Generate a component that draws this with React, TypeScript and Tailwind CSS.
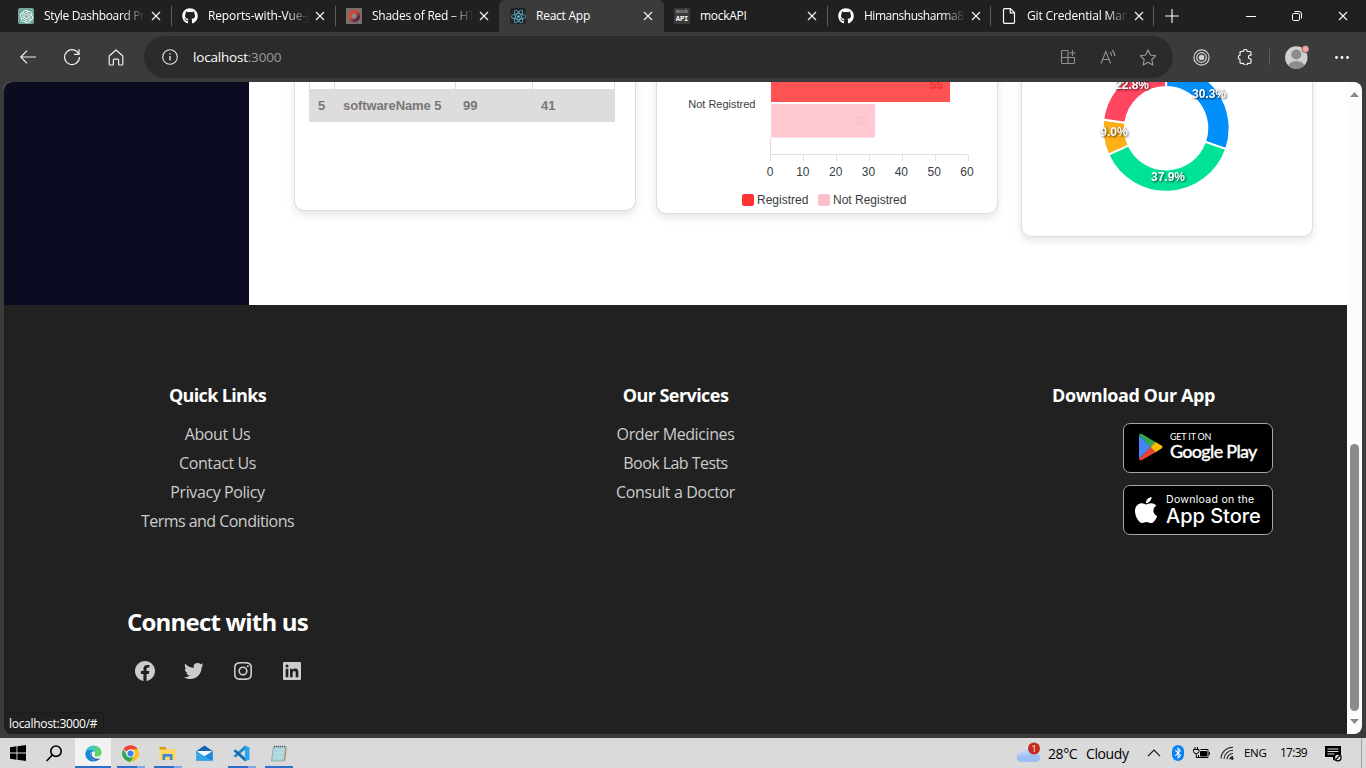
import React from "react";
import { FaGithub, FaReact, FaApple, FaBluetoothB } from "react-icons/fa";
import { SiOpenai } from "react-icons/si";
import { BiLogoFacebookCircle, BiLogoTwitter, BiLogoInstagram, BiLogoLinkedinSquare } from "react-icons/bi";

const CloseIcon = ({ className = "" }: { className?: string }) => (
  <svg width="10" height="10" viewBox="0 0 10 10" className={"shrink-0 " + className} fill="none" stroke="#f2f2f2" strokeWidth="1.2">
    <path d="M1 1l8 8M9 1l-8 8" />
  </svg>
);

type TabProps = { icon: React.ReactNode; title: string; width: string; text: string; active?: boolean; fade?: boolean; line?: boolean };

const Tab = ({ icon, title, width, text, active, fade, line }: TabProps) => (
  <div className={`flex h-8 shrink-0 items-center pl-[10px] ${width} ${active ? "rounded-t-[6px] bg-[#3b3b3b]" : ""}`}>
    <div className="flex h-4 w-4 shrink-0 items-center justify-center">{icon}</div>
    <div
      className={`ml-[10px] w-[101px] shrink-0 overflow-hidden whitespace-nowrap text-[12px] leading-[18px] text-white ${text} ${
        fade ? "[mask-image:linear-gradient(to_right,black_78%,transparent_100%)]" : ""
      }`}
    >
      {title}
    </div>
    <CloseIcon className="ml-[6px]" />
    <div className={`ml-auto h-5 w-px ${line ? "bg-[#5c5c5c]" : ""}`} />
  </div>
);

const TabBar = () => (
  <div className="flex h-8 shrink-0 items-center bg-[#202020] pl-2">
    <Tab
      width="w-[164px]" text="tracking-[-0.35px]" fade line title="Style Dashboard Project"
      icon={<div className="flex h-4 w-4 items-center justify-center rounded-[2px] bg-[#74aa9c]"><SiOpenai size={13} color="#fff" /></div>}
    />
    <Tab width="w-[164px]" text="tracking-[-0.14px]" fade line title="Reports-with-Vue-js" icon={<FaGithub size={16} color="#fff" />} />
    <Tab
      width="w-[163px]" text="tracking-[-0.25px]" fade title="Shades of Red – HTML"
      icon={
        <svg width="16" height="16" viewBox="0 0 16 16">
          <defs><linearGradient id="ring" x1="0" y1="0" x2="1" y2="1"><stop offset=".45" stopColor="#c54a38" /><stop offset=".8" stopColor="#4c2344" /></linearGradient></defs>
          <rect width="16" height="16" fill="#77706f" />
          <circle cx="8" cy="8" r="6.200" fill="url(#ring)" /><circle cx="8" cy="8" r="2.600" fill="#8b8785" />
        </svg>
      }
    />
    <Tab
      width="w-[165px]" text="ml-[11px] tracking-[-0.25px]" active title="React App"
      icon={<div className="ml-[2px] flex h-4 w-4 shrink-0 items-center justify-center rounded-[2px] bg-[#23272b]"><FaReact size={15} color="#61c5de" /></div>}
    />
    <Tab
      width="w-[164px]" text="tracking-[-0.28px]" line title="mockAPI"
      icon={
        <div className="flex h-4 w-4 flex-col items-center bg-[#3a3a3a] font-['Liberation_Mono'] font-bold">
          <span className="text-[5px] leading-[8px] text-[#9a9a9a]">mock</span>
          <span className="text-[7px] leading-[7px] text-white">API</span>
        </div>
      }
    />
    <Tab width="w-[163px]" text="tracking-[-0.48px]" fade line title="Himanshusharma83" icon={<FaGithub size={16} color="#fff" />} />
    <Tab
      width="w-[163px]" text="tracking-[-0.16px]" fade line title="Git Credential Manager"
      icon={
        <svg width="16" height="16" viewBox="0 0 16 16" fill="none" stroke="#fff" strokeWidth="1.2">
          <path d="M3.5 0.7h6l4 4v9.6q0 1-1 1h-9q-1 0-1-1V1.7q0-1 1-1z" /><path d="M9.3 0.9v4h4" />
        </svg>
      }
    />
    <svg width="14" height="14" viewBox="0 0 14 14" className="ml-[11px]" stroke="#fff" strokeWidth="1.1"><path d="M7 0v14M0 7h14" /></svg>
    <div className="ml-auto flex">
      <div className="flex w-[46px] items-center justify-center"><svg width="10" height="10" stroke="#fff"><path d="M0 5.5h10" /></svg></div>
      <div className="flex w-[46px] items-center justify-center">
        <svg width="10" height="10" fill="none" stroke="#fff"><rect x="0.5" y="2.5" width="7" height="7" rx="1.2" /><path d="M2.5 .5h4.5q2.5 0 2.5 2.5v4.5" /></svg>
      </div>
      <div className="flex w-[46px] items-center justify-center"><CloseIcon /></div>
    </div>
  </div>
);

const Cell = ({ children, w = "w-[44px]" }: { children: React.ReactNode; w?: string }) => (
  <div className={`flex h-[50px] shrink-0 items-center justify-center ${w}`}>{children}</div>
);

const Toolbar = () => (
  <div className="flex h-[50px] shrink-0 items-center pl-[6px]">
    <Cell>
      <svg width="16" height="14" viewBox="0 0 16 14" fill="none" stroke="#f0f0f0" strokeWidth="1.2"><path d="M16 7H1M7 .7L.8 7 7 13.3" /></svg>
    </Cell>
    <Cell>
      <svg width="18" height="18" viewBox="0 0 18 18" fill="none" stroke="#f0f0f0" strokeWidth="1.2"><path d="M15.8 6.2A7.4 7.4 0 1 0 16.4 9M16 1.3v5h-5" /></svg>
    </Cell>
    <Cell>
      <svg width="16" height="17" viewBox="0 0 16 17" fill="none" stroke="#f0f0f0" strokeWidth="1.2" strokeLinejoin="round">
        <path d="M1.2 7L8 1l6.800 6v8.200q0 .8-.8.8h-2.600q-.8 0-.8-.8V11q0-.8-.8-.8H6.200q-.8 0-.8.8v4.200q0 .8-.8.8H2q-.8 0-.8-.8z" />
      </svg>
    </Cell>
    <div className="ml-[6px] flex h-[42px] w-[1029px] items-center rounded-full bg-[#2b2b2b] pl-[18px] pr-[5px]">
      <svg width="16" height="16" viewBox="0 0 16 16" fill="none" stroke="#e6e6e6" strokeWidth="1.1"><circle cx="8" cy="8" r="7.3" /><path d="M8 7v4.500M8 4.300v1.300" strokeWidth="1.400" /></svg>
      <div className="ml-[15px] text-[13.500px] leading-5 tracking-[-0.2px] text-white">localhost<span className="text-[#9b9b9b]">:3000</span></div>
      <div className="ml-auto flex">
        <Cell w="w-10">
          <svg width="16" height="16" viewBox="0 0 16 16" fill="none" stroke="#8f8f8f" strokeWidth="1.1">
            <path d="M8 1.500H2.500q-1 0-1 1v11q0 1 1 1h11q1 0 1-1V8.500H1.500M8 1.500v13M12.500 1v6M9.500 4h6" />
          </svg>
        </Cell>
        <Cell w="w-10">
          <svg width="17" height="16" viewBox="0 0 17 16" fill="none" stroke="#8f8f8f" strokeWidth="1.1">
            <path d="M1 14.500L5.800 2.500l4.800 12M2.700 10.500h6.200M10 3q1.700 1.500 1.700 4M12 1.300q2.900 2.200 2.800 6" />
          </svg>
        </Cell>
        <Cell w="w-10">
          <svg width="18" height="17" viewBox="0 0 18 17" fill="none" stroke="#9b9b9b" strokeWidth="1.1" strokeLinejoin="round">
            <path d="M9 1l2.400 5 5.400.7-4 3.800 1 5.500L9 13.300 4.200 16l1-5.500-4-3.800L6.600 6z" />
          </svg>
        </Cell>
      </div>
    </div>
    <div className="w-[6px]" />
    <Cell>
      <svg width="17" height="17" viewBox="0 0 17 17" fill="none" stroke="#d0d0d0" strokeWidth="1.200">
        <circle cx="8.500" cy="8.500" r="7.600" /><circle cx="8.500" cy="8.500" r="4.800" /><circle cx="8.500" cy="8.500" r="2.200" fill="#d0d0d0" />
      </svg>
    </Cell>
    <Cell>
      <svg width="16" height="16" viewBox="0 0 16 16" fill="none" stroke="#f0f0f0" strokeWidth="1.200" strokeLinejoin="round">
        <path d="M4 2.500h2.200a2 2 0 0 1 4 0H13q1 0 1 1V6.200h-.6a1.900 1.900 0 0 0 0 3.800h.6v3.300q0 1-1 1h-2.500a2 2 0 0 1-4 0H4q-1 0-1-1V10.500a2.200 2.200 0 0 1 0-4.300V3.500q0-1 1-1z" />
      </svg>
    </Cell>
    <div className="ml-[2px] h-4 w-px bg-[#5d5d5d]" />
    <div className="ml-[14px] flex h-[26px] w-[26px] items-center">
      <svg width="26" height="26" viewBox="0 0 26 26">
        <clipPath id="av"><circle cx="12.300" cy="13.500" r="11.200" /></clipPath>
        <circle cx="12.300" cy="13.500" r="11.200" fill="#d2d0ce" />
        <circle cx="12.300" cy="10.500" r="5" fill="#8e8c8a" />
        <ellipse cx="12.300" cy="22.500" rx="8" ry="5.500" fill="#8e8c8a" clipPath="url(#av)" />
        <circle cx="21.500" cy="5" r="3.600" fill="#f4a6a0" stroke="#3b3b3b" strokeWidth=".6" />
      </svg>
    </div>
    <svg width="14" height="3" viewBox="0 0 14 3" className="ml-auto mr-[17px]" fill="#fff"><circle cx="1.500" cy="1.500" r="1.400" /><circle cx="7" cy="1.500" r="1.400" /><circle cx="12.500" cy="1.500" r="1.400" /></svg>
  </div>
);

const polar = (cx: number, cy: number, r: number, deg: number) => {
  const a = ((deg - 90) * Math.PI) / 180;
  return `${(cx + r * Math.cos(a)).toFixed(2)} ${(cy + r * Math.sin(a)).toFixed(2)}`;
};

const slice = (from: number, to: number) => {
  const [cx, cy, R, r] = [1166.1, 128.3, 63.5, 41.2];
  const big = to - from > 180 ? 1 : 0;
  return `M${polar(cx, cy, R, from)}A${R} ${R} 0 ${big} 1 ${polar(cx, cy, R, to)}L${polar(cx, cy, r, to)}A${r} ${r} 0 ${big} 0 ${polar(cx, cy, r, from)}Z`;
};

const slices = [
  { from: 0, to: 109.1, color: "#008ffb" },
  { from: 109.1, to: 245.5, color: "#00e396" },
  { from: 245.5, to: 277.9, color: "#feb019" },
  { from: 277.9, to: 360, color: "#ff4560" },
];

const donutLabels = [
  { x: 1209, y: 98, t: "30.3%" },
  { x: 1168, y: 181, t: "37.9%" },
  { x: 1114, y: 136, t: "9.0%" },
  { x: 1132, y: 89, t: "22.8%" },
];

const card = "shrink-0 rounded-b-[10px] border border-t-0 border-[#dddddd] bg-white shadow-[0_4px_8px_rgba(0,0,0,0.1)] -mt-[20px] pt-[20px]";

const Dashboard = () => (
  <div className="flex h-[223px] shrink-0 overflow-hidden bg-white">
    <div className="w-[245px] shrink-0 bg-[#0b0b22]" />
    <div className="flex items-start pl-[45px]">
      <div className={`h-[149px] w-[342px] pl-[14px] ${card}`}>
        <div className="w-[306px] font-['Liberation_Sans',sans-serif] text-[13px] font-bold tracking-[-0.1px] text-[#7b7676]">
          <div className="flex h-[7px] border-r border-[#dddddd]">
            <div className="w-[25px] border-l border-[#dddddd]" />
            <div className="w-[121px] border-l border-[#dddddd]" />
            <div className="w-[77px] border-l border-[#dddddd]" />
            <div className="border-l border-[#dddddd]" />
          </div>
          <div className="flex h-[33px] items-center bg-[#dddddd]">
            <div className="w-[25px] pl-[9px]">5</div>
            <div className="w-[121px] pl-[9px]">softwareName 5</div>
            <div className="w-[77px] pl-[8px]">99</div>
            <div className="pl-[9px]">41</div>
          </div>
        </div>
      </div>
      <div className={`ml-5 h-[152px] w-[342px] ${card}`}>
        <svg width="340" height="130" viewBox="657 82 340 130" className="font-['Liberation_Sans',sans-serif]" fill="#373d3f" fontSize="12">
          <rect x="771" y="70" width="179" height="32" fill="#ff5252" />
          <rect x="771" y="104" width="104" height="33.500" fill="#ffc9d2" />
          <text x="943" y="89" textAnchor="end" fontWeight="bold" fill="#ff3333">55</text>
          <text x="868" y="125" textAnchor="end" fontWeight="bold" fill="#ffc0cb">32</text>
          <text x="755.500" y="108" textAnchor="end" fontSize="11">Not Registred</text>
          <path d="M770.500 138.500V154.500M770 154.500H967M770.500 155v6M803.500 155v6M836.500 155v6M869.500 155v6M902.500 155v6M935.500 155v6M968.500 155v6" stroke="#dedede" fill="none" />
          {[0, 10, 20, 30, 40, 50, 60].map((n) => (
            <text key={n} x={770 + n * 3.283} y="176" textAnchor="middle">{n}</text>
          ))}
          <rect x="742" y="194" width="12" height="12" rx="2" fill="#ff3333" />
          <text x="757" y="204">Registred</text>
          <rect x="818" y="194" width="12" height="12" rx="2" fill="#ffc0cb" />
          <text x="833" y="204">Not Registred</text>
        </svg>
      </div>
      <div className={`ml-[23px] h-[175px] w-[292px] ${card}`}>
        <svg width="290" height="154" viewBox="1022 82 290 154">
          {slices.map((s) => (
            <path key={s.color} d={slice(s.from, s.to)} fill={s.color} stroke="#fff" strokeWidth="2" />
          ))}
          <g className="font-['Liberation_Sans',sans-serif] [filter:drop-shadow(1px_1px_1px_rgba(0,0,0,0.7))]" fontSize="12" fontWeight="bold" fill="#fff" textAnchor="middle">
            {donutLabels.map((l) => <text key={l.t} x={l.x} y={l.y}>{l.t}</text>)}
          </g>
        </svg>
      </div>
    </div>
  </div>
);

const Column = ({ title, links, heading }: { title: string; links: { t: string; s: string }[]; heading: string }) => (
  <div className="flex w-[427px] flex-col items-center">
    <h3 className={`h-[24px] text-[18px] font-bold leading-[24px] text-white ${heading}`}>{title}</h3>
    <ul className="mt-[13px] flex flex-col items-center text-[16px] leading-[29px] text-[#cccccc]">
      {links.map((l) => <li key={l.t} className={l.s}>{l.t}</li>)}
    </ul>
  </div>
);

const Footer = () => (
  <footer className="flex h-[429px] shrink-0 flex-col bg-[#212121] pt-[78px]">
    <div className="flex h-[225px] gap-[31px]">
      <Column
        title="Quick Links"
        heading="tracking-[-0.66px]"
        links={[
          { t: "About Us", s: "tracking-[-0.35px]" },
          { t: "Contact Us", s: "tracking-[-0.4px]" },
          { t: "Privacy Policy", s: "tracking-[-0.4px]" },
          { t: "Terms and Conditions", s: "tracking-[-0.53px]" },
        ]}
      />
      <Column
        title="Our Services"
        heading="tracking-[-0.56px]"
        links={[
          { t: "Order Medicines", s: "tracking-[-0.4px]" },
          { t: "Book Lab Tests", s: "tracking-[-0.55px]" },
          { t: "Consult a Doctor", s: "tracking-[-0.35px]" },
        ]}
      />
      <div className="flex w-[427px] flex-col">
        <h3 className="h-[24px] text-center text-[18px] font-bold leading-[24px] tracking-[-0.42px] text-white">Download Our App</h3>
        <div className="ml-[203px] mt-[16px] flex h-[50px] w-[150px] items-center rounded-[7px] border border-[#a6a6a6] bg-black pl-[15px] text-white">
          <svg width="24" height="28" viewBox="0 0 24 28" className="-mt-[2px]">
            <path d="M0 2v24L12 14z" fill="#4285f4" />
            <path d="M0 2Q1 0 3 1L17 9.500 12 14.500z" fill="#34a853" />
            <path d="M0 26q1 2 3 1L17 19 12 13.500z" fill="#ea4335" />
            <path d="M16.500 9l6 3.500q2 1.500 0 3L16.500 19.200 11.800 14z" fill="#fbbc04" />
          </svg>
          <div className="-mt-[3px] ml-[7px] flex flex-col whitespace-nowrap font-['Lato',sans-serif]">
            <span className="text-[9px] leading-[10px] tracking-[-0.2px]">GET IT ON</span>
            <span className="text-[18px] font-medium leading-[19px] tracking-[-0.7px] [-webkit-text-stroke:0.3px_white]">Google Play</span>
          </div>
        </div>
        <div className="ml-[203px] mt-[12px] flex h-[50px] w-[150px] items-center rounded-[7px] border border-[#a6a6a6] bg-black pl-[7px] text-white">
          <FaApple size={30} className="-mt-[1px] shrink-0" />
          <div className="ml-[5px] flex flex-col whitespace-nowrap font-['Inter',sans-serif]">
            <span className="text-[10.500px] leading-[12px] tracking-[0.3px]">Download on the</span>
            <span className="text-[20px] font-medium leading-[20px] tracking-[-0.02px]">App Store</span>
          </div>
        </div>
      </div>
    </div>
    <div className="flex w-[427px] flex-col items-center">
      <h2 className="text-[24px] font-bold leading-[28px] tracking-[-0.8px] text-white">Connect with us</h2>
      <div className="mt-[23px] flex gap-[25px] pl-[2px] text-[#cccccc]">
        <BiLogoFacebookCircle size={24} /><BiLogoTwitter size={24} /><BiLogoInstagram size={24} /><BiLogoLinkedinSquare size={24} />
      </div>
    </div>
  </footer>
);

const Task = ({ children, bar, active }: { children?: React.ReactNode; bar?: "one" | "two"; active?: boolean }) => (
  <div className={`flex h-[30px] shrink-0 flex-col items-center ${active ? "mr-px w-[36px] bg-[#f2f2f2]" : "w-[37px]"}`}>
    <div className="flex h-[28px] items-center pt-[2px]">{children}</div>
    {bar && (
      <div className={`flex h-[2px] ${active ? "w-full" : "w-[28px]"} bg-[#2b6fcb]`}>
        {bar === "two" && <div className="ml-auto w-2 bg-[#7ba8e0]" />}
      </div>
    )}
  </div>
);

const Taskbar = () => (
  <div className="flex h-[30px] shrink-0 items-center bg-[#dadada] text-black">
    <div className="flex w-[36px] items-center justify-center">
      <svg width="16" height="16" viewBox="0 0 16 16"><path d="M0 2.200L6.500 1.300V7.600H0zM7.400 1.200L16 0v7.600H7.400zM0 8.500h6.500v6.200L0 13.800zM7.400 8.500H16V16l-8.600-1.200z" /></svg>
    </div>
    <div className="mr-[3px] flex w-[36px] items-center justify-center">
      <svg width="16" height="17" viewBox="0 0 16 17" fill="none" stroke="#000" strokeWidth="1.600"><circle cx="10" cy="6.200" r="5.200" /><path d="M6.300 10L.6 16" /></svg>
    </div>
    <Task active bar="one">
      <svg width="17" height="17" viewBox="0 0 17 17">
        <defs>
          <linearGradient id="e1" x1="0" y1="0" x2="1" y2=".5"><stop offset="0" stopColor="#35b8f0" /><stop offset="1" stopColor="#5fdc5a" /></linearGradient>
          <linearGradient id="e2" x1="0" y1="0" x2="1" y2="1"><stop offset="0" stopColor="#1576c0" /><stop offset="1" stopColor="#0c4f9e" /></linearGradient>
        </defs>
        <path d="M.4 8C1 3.500 4.300.5 8.500.5c4.800 0 8.100 3.400 8.100 6.900 0 2.600-1.900 4.200-4.300 4.200-1.800 0-2.900-.7-2.900-1.300 0-.5.8-.9.8-2.100C10.200 6.300 7.700 4.600 5 4.600 2.600 4.600.9 6 .4 8z" fill="url(#e1)" />
        <path d="M.4 8C.9 6 2.600 4.600 5 4.600c2 0 3.700.9 4.600 2.100-2.700-1-4.600.8-4.600 3 0 3.300 3.300 5.900 7 5.300 1-.1 2-.5 2.700-.9-1.400 1.600-3.700 2.500-6.200 2.500C3.300 16.600 0 12.500.4 8z" fill="#1688d4" />
        <path d="M5.600 8.200c-2 4.400 3 7.600 7.400 6.500 1.300-.4 2-.9 2.400-1.500-3.300 1.400-7.100.4-8.400-2.100-.6-1.100-.5-2.600.3-3.700-.7.1-1.400.4-1.700.8z" fill="url(#e2)" />
      </svg>
    </Task>
    <Task bar="two">
      <svg width="17" height="17" viewBox="0 0 17 17">
        <path d="M1.360 4.250A8.250 8.250 0 0 1 15.640 4.250L8.500 8.500z" fill="#ea4335" />
        <path d="M15.640 4.250H8.500V8.500L8.500 16.750A8.250 8.250 0 0 0 15.640 4.250z" fill="#fbc116" />
        <path d="M1.360 4.250L5 10.500 12 10.500 8.500 16.750A8.250 8.250 0 0 1 1.360 4.250z" fill="#2da94f" />
        <circle cx="8.500" cy="8.500" r="4" fill="#fff" /><circle cx="8.500" cy="8.500" r="3.100" fill="#3f80ee" />
      </svg>
    </Task>
    <Task bar="two">
      <svg width="17" height="15" viewBox="0 0 17 15">
        <path d="M.5 1h6l1.500 2h8.500v11H.5z" fill="#ffd766" /><path d="M.5 1h6l1 2.500h-7z" fill="#dd9b12" />
        <path d="M3.500 14V9q0-1 1-1h8q1 0 1 1v5h-2.700v-3.200H6.200V14z" fill="#3b88d8" />
      </svg>
    </Task>
    <Task>
      <svg width="17" height="16" viewBox="0 0 17 16"><path d="M.5 6L8.500.5 16.500 6v9.500H.5z" fill="#0f64b4" /><path d="M1.500 6h14v1L8.500 11.500l-7-4.500z" fill="#f4fafe" /><path d="M.5 6.500l8 5 8-5v9H.5z" fill="#2fa7ea" /><path d="M16.500 6.500v9L8.500 11.500z" fill="#1a8ad8" /></svg>
    </Task>
    <Task bar="two">
      <svg width="17" height="17" viewBox="0 0 17 17">
        <path d="M12 .5l4.500 2v12l-4.500 2z" fill="#2aa5ee" /><path d="M12 .5v4L2.500 12.500.5 11z" fill="#1c86cc" /><path d="M12 16.500v-4L2.500 4.500.5 6z" fill="#0b6cb5" />
      </svg>
    </Task>
    <Task bar="one">
      <svg width="16" height="17" viewBox="0 0 16 17">
        <path d="M2.500 1.500H15L13 16H.5z" fill="#a9d6dc" stroke="#70949c" strokeWidth=".6" /><path d="M13 16l2-14.500.8 1L14 16z" fill="#b48c45" />
        <path d="M4 5h8.500M3.700 7.500h8.500M3.400 10h8.500M3 12.500h8.500" stroke="#c6e6ea" strokeWidth=".7" /><path d="M3 1.500h12" stroke="#555" strokeWidth="1.600" strokeDasharray="1 1" />
      </svg>
    </Task>
    <div className="ml-auto flex items-center">
      <svg width="26" height="21" viewBox="0 0 26 21" className="-mt-[2px]">
        <defs><linearGradient id="cl" x1="0" y1="0" x2="0" y2="1"><stop offset="0" stopColor="#d8e6fb" /><stop offset="1" stopColor="#88aef0" /></linearGradient></defs>
        <path d="M5.500 20a4.500 4.500 0 0 1-.5-9 7.500 7.500 0 0 1 14.300-1.500A5.300 5.300 0 0 1 19.500 20z" fill="url(#cl)" />
        <path d="M1.500 17.500q4-3.500 8-1.500 5-5 14-2.500-.5 6.500-4.500 6.500H5.500q-3 0-4-2.500z" fill="#9dbdf5" />
        <circle cx="18" cy="6.500" r="6" fill="#c42b1c" /><text x="18" y="9.800" fontSize="9" textAnchor="middle" fill="#fff" className="font-['Open_Sans',sans-serif]">1</text>
      </svg>
      <div className="ml-[6px] w-[38px] whitespace-nowrap text-[14px] tracking-[-0.4px]">28°C</div>
      <div className="w-[61px] whitespace-nowrap text-[14px] tracking-[-0.4px]">Cloudy</div>
      <svg width="14" height="8" viewBox="0 0 14 8" fill="none" stroke="#111" strokeWidth="1.200" className="mr-[11px]"><path d="M1 7.200L7 1.200l6 6" /></svg>
      <div className="flex h-4 w-3 items-center justify-center rounded-[6px] bg-[#0a84f5]"><FaBluetoothB size={12} color="#fff" /></div>
      <svg width="17" height="14" viewBox="0 0 17 14" className="ml-[9px]" fill="none" stroke="#000" strokeWidth="1">
        <path d="M2 1v2.500M4.500 1v2.500M.5 3.500h5.500v2q0 2-2.700 2T.5 5.500zM3.300 7.500v4h3" /><path d="M7.500 3.500h7.500v8H5.500V9" /><path d="M7.500 5.500h6v4.500h-6z" fill="#000" /><path d="M16.300 6v3" />
      </svg>
      <svg width="14" height="14" viewBox="0 0 14 14" className="ml-[10px]" fill="none" stroke="#222" strokeWidth="1.100">
        <path d="M1 12.500A12 12 0 0 1 13 1.200M4 13A9 9 0 0 1 13 4.300M7 13.300a6 6 0 0 1 6-5.800M9.800 13.500a3.500 3.500 0 0 1 3.200-3" /><circle cx="12.300" cy="12.500" r="1.200" fill="#000" stroke="none" />
      </svg>
      <div className="ml-[10px] w-[36px] whitespace-nowrap text-[11.500px] tracking-[-0.3px]">ENG</div>
      <div className="w-[45px] whitespace-nowrap text-[12px] tracking-[-0.75px]">17:39</div>
      <svg width="17" height="17" viewBox="0 0 17 17">
        <path d="M0 1h16v11h-3.500L8 15.500V12H0z" /><path d="M2.500 4h11M2.500 6.500h11M2.500 9h7" stroke="#dadada" strokeWidth="1.100" />
        <circle cx="12.800" cy="12.500" r="3.300" fill="#dadada" stroke="#000" strokeWidth="1.200" /><path d="M10.600 14.800l4.400-4.600" stroke="#000" strokeWidth="1.200" />
      </svg>
      <div className="ml-[19px] mr-[4px] h-[30px] w-px bg-[#a0a0a0]" />
    </div>
  </div>
);

const Scrollbar = () => (
  <div className="flex w-[15px] shrink-0 flex-col items-center bg-[#fcfcfc] pt-[10px]">
    <svg width="9" height="5" viewBox="0 0 9 5"><path d="M0 5L4.500 0 9 5z" fill="#8b8b8b" /></svg>
    <div className="mt-[347px] h-[267px] w-[9px] rounded-full bg-[#8b8b8b]" />
    <svg width="9" height="5" viewBox="0 0 9 5" className="mt-[8px]"><path d="M0 0l4.500 5L9 0z" fill="#8b8b8b" /></svg>
  </div>
);

export default function App() {
  return (
    <div className="flex h-[768px] w-[1366px] flex-col overflow-hidden bg-[#3b3b3b] font-['Open_Sans',sans-serif]">
      <TabBar />
      <Toolbar />
      <div className="relative mx-1 mb-1 flex h-[652px] shrink-0 overflow-hidden rounded-[8px]">
        <div className="flex w-[1343px] shrink-0 flex-col">
          <Dashboard />
          <Footer />
        </div>
        <Scrollbar />
        <div className="absolute bottom-0 left-0 h-[22px] w-[100px] rounded-tr-[4px] border-r border-t border-[#1b1b1b] bg-[#202020] pl-[5px] text-[12px] leading-[21px] tracking-[-0.3px] text-white">
          localhost:3000/#
        </div>
      </div>
      <Taskbar />
    </div>
  );
}
